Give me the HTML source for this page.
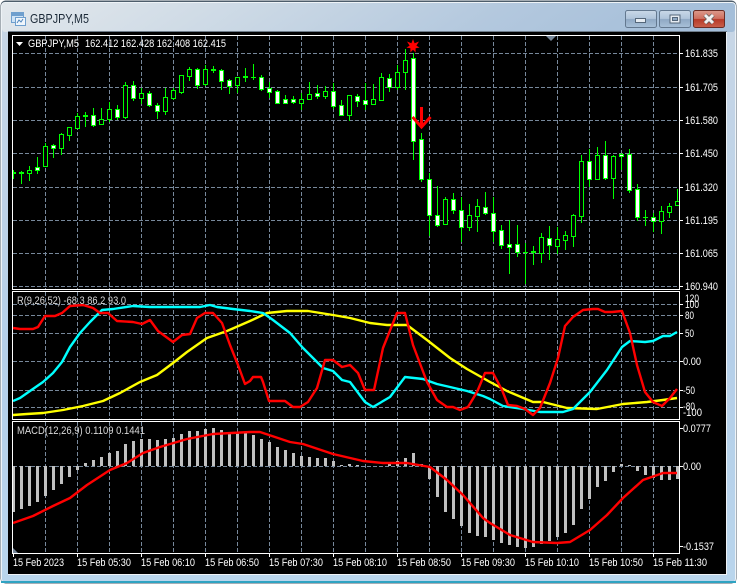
<!DOCTYPE html>
<html>
<head>
<meta charset="utf-8">
<title>GBPJPY,M5</title>
<style>
html,body{margin:0;padding:0;background:#fff;}
svg{display:block;position:absolute;left:0;top:0;}
text{font-family:"Liberation Sans",sans-serif;}
</style>
</head>
<body>
<svg width="737" height="584" viewBox="0 0 737 584" xmlns="http://www.w3.org/2000/svg">
<defs>
<linearGradient id="tb" x1="0" x2="1" y1="0" y2="0.06">
<stop offset="0" stop-color="#e3e8ec"/><stop offset="0.3" stop-color="#cfdbe6"/><stop offset="0.7" stop-color="#b3c8de"/><stop offset="1" stop-color="#a4bed9"/>
</linearGradient>
<linearGradient id="btn" x1="0" x2="0" y1="0" y2="1">
<stop offset="0" stop-color="#c9d8e8"/><stop offset="0.48" stop-color="#afc4da"/><stop offset="0.52" stop-color="#8fa9c4"/><stop offset="1" stop-color="#a9c1d9"/>
</linearGradient>
<linearGradient id="cls" x1="0" x2="0" y1="0" y2="1">
<stop offset="0" stop-color="#dc9a8c"/><stop offset="0.48" stop-color="#cf6f5f"/><stop offset="0.52" stop-color="#b63a28"/><stop offset="1" stop-color="#c9604c"/>
</linearGradient>
<linearGradient id="side" x1="0" x2="0" y1="0" y2="1">
<stop offset="0" stop-color="#c9d7e6"/><stop offset="0.6" stop-color="#b5cfe9"/><stop offset="1" stop-color="#b9d5ec"/>
</linearGradient>
<clipPath id="c1"><rect x="13" y="36" width="666" height="253"/></clipPath>
<clipPath id="c2"><rect x="13" y="292" width="666" height="127"/></clipPath>
<clipPath id="c3"><rect x="13" y="422" width="666" height="131"/></clipPath>
</defs>

<!-- window frame -->
<rect x="0.5" y="0.5" width="736" height="583" rx="5" fill="#4d5d6b"/>
<rect x="1" y="2" width="735" height="581" rx="4" fill="#eef3f7"/>
<rect x="2" y="3" width="733" height="579" rx="3" fill="url(#side)"/>
<rect x="2" y="3" width="733" height="29" rx="3" fill="url(#tb)"/>
<rect x="1" y="581" width="735" height="2" fill="#2fa3c2"/>
<rect x="8" y="31" width="719" height="544" fill="#eef2f6"/>
<rect x="8" y="31" width="719" height="1" fill="#6f7d8b"/>
<rect x="8" y="32" width="718" height="542" fill="#000"/>

<!-- title icon -->
<rect x="11.5" y="12.5" width="12" height="10" fill="#cfe3f6" stroke="#6f9fce"/>
<rect x="11.5" y="12.5" width="12" height="3" fill="#6f9fce" stroke="#6f9fce"/>
<rect x="15.5" y="17.5" width="10" height="8" fill="#f0f6fc" stroke="#6f9fce"/>
<path d="M17 23l2-3 2 2 2-3" fill="none" stroke="#4f86bd"/>
<text x="30" y="23" font-size="12.5" fill="#1c2a38" textLength="59" lengthAdjust="spacingAndGlyphs">GBPJPY,M5</text>

<!-- buttons -->
<rect x="625.5" y="10.5" width="31" height="17" rx="2" fill="url(#btn)" stroke="#63788f"/>
<rect x="635.5" y="18.5" width="10" height="4" fill="#e6ecf2" stroke="#55677a"/>
<rect x="659.5" y="10.5" width="31" height="17" rx="2" fill="url(#btn)" stroke="#63788f"/>
<rect x="670" y="15" width="10" height="8" fill="#e6ecf2" stroke="#55677a"/>
<rect x="672.5" y="17.5" width="5" height="3" fill="#8fa9c4" stroke="#55677a"/>
<rect x="693.5" y="10.5" width="31" height="17" rx="2" fill="url(#cls)" stroke="#6b2d25"/>
<path d="M705 15l8 8M713 15l-8 8" stroke="#5c5c5c" stroke-width="4.4"/>
<path d="M705 15l8 8M713 15l-8 8" stroke="#f2f2f2" stroke-width="3"/>

<!-- main panel grid -->
<g stroke="#77889b" stroke-width="1" stroke-dasharray="4 2" fill="none" shape-rendering="crispEdges">
<path d="M13 53.5H679M13 87.5H679M13 120.5H679M13 153.5H679M13 187.5H679M13 220.5H679M13 253.5H679M13 286.5H679"/>
<path d="M45.5 36V289M77.5 36V289M109.5 36V289M141.5 36V289M173.5 36V289M205.5 36V289M237.5 36V289M269.5 36V289M301.5 36V289M333.5 36V289M365.5 36V289M397.5 36V289M429.5 36V289M461.5 36V289M493.5 36V289M525.5 36V289M557.5 36V289M589.5 36V289M621.5 36V289M653.5 36V289"/>
</g>

<!-- candles -->
<g clip-path="url(#c1)" shape-rendering="crispEdges">
<path stroke="#00ff00" fill="none" d="M13.5 170V179M21.5 171V184M29.5 166V181M37.5 157V174M45.5 143V167M53.5 144V158M61.5 133V155M69.5 127V141M77.5 113V129M85.5 112V127M93.5 108V127M101.5 108V125M109.5 102V122M117.5 105V120M125.5 82V119M133.5 81V101M141.5 88V104M149.5 91V107M157.5 103V119M165.5 88V115M173.5 88V100M181.5 75V94M189.5 67V81M197.5 68V89M205.5 65V86M213.5 66V73M221.5 69V90M229.5 79V94M237.5 77V93M245.5 68V82M253.5 64V80M261.5 75V91M269.5 82V98M277.5 90V103M285.5 95V104M293.5 96V104M301.5 93V110M309.5 82V99M317.5 85V99M325.5 86V99M333.5 83V109M341.5 100V116M349.5 95V121M357.5 94V107M365.5 83V110M373.5 84V105M381.5 73V101M389.5 74V92M397.5 65V90M405.5 49V90M413.5 53V160M421.5 133V182M429.5 173V236M437.5 186V227M445.5 197V224M453.5 193V214M461.5 197V242M469.5 204V231M477.5 199V232M485.5 192V215M493.5 197V242M501.5 225V249M509.5 220V274M517.5 225V257M525.5 243V284M533.5 246V265M541.5 233V263M549.5 226V260M557.5 227V254M565.5 231V250M573.5 214V247M581.5 155V223M589.5 149V187M597.5 147V179M605.5 141V180M613.5 155V199M621.5 153V170M629.5 149V193M637.5 184V221M645.5 210V226M653.5 213V232M661.5 206V234M669.5 203V218M677.5 189V206"/>
<!-- hollow -->
<path stroke="#00ff00" fill="#000" d="M27.5 170.5h4v3h-4zM43.5 146.5h4v20h-4zM59.5 134.5h4v14h-4zM67.5 127.5h4v8h-4zM75.5 116.5h4v12h-4zM99.5 119.5h4v5h-4zM107.5 109.5h4v10h-4zM123.5 85.5h4v32h-4zM139.5 93.5h4v5h-4zM163.5 97.5h4v14h-4zM171.5 90.5h4v8h-4zM179.5 75.5h4v17h-4zM187.5 69.5h4v7h-4zM203.5 69.5h4v15h-4zM235.5 77.5h4v8h-4zM299.5 99.5h4v4h-4zM307.5 94.5h4v5h-4zM323.5 91.5h4v5h-4zM347.5 95.5h4v20h-4zM371.5 99.5h4v5h-4zM379.5 77.5h4v23h-4zM395.5 72.5h4v15h-4zM403.5 60.5h4v12h-4zM443.5 199.5h4v25h-4zM467.5 215.5h4v12h-4zM475.5 206.5h4v10h-4zM539.5 237.5h4v16h-4zM555.5 239.5h4v7h-4zM563.5 235.5h4v5h-4zM571.5 215.5h4v21h-4zM579.5 161.5h4v55h-4zM595.5 155.5h4v24h-4zM611.5 156.5h4v22h-4zM659.5 211.5h4v10h-4zM667.5 206.5h4v6h-4zM675.5 201.5h4v4h-4z"/>
<!-- filled -->
<path stroke="#00ff00" fill="#fff" d="M35.5 167.5h4v3h-4zM51.5 145.5h4v3h-4zM91.5 115.5h4v10h-4zM115.5 109.5h4v8h-4zM131.5 85.5h4v13h-4zM147.5 93.5h4v12h-4zM155.5 105.5h4v6h-4zM195.5 69.5h4v16h-4zM219.5 70.5h4v11h-4zM227.5 80.5h4v6h-4zM259.5 77.5h4v12h-4zM267.5 88.5h4v4h-4zM275.5 91.5h4v12h-4zM283.5 99.5h4v4h-4zM291.5 99.5h4v3h-4zM315.5 93.5h4v3h-4zM331.5 91.5h4v15h-4zM339.5 105.5h4v10h-4zM355.5 96.5h4v5h-4zM363.5 100.5h4v4h-4zM387.5 78.5h4v9h-4zM411.5 58.5h4v83h-4zM419.5 139.5h4v40h-4zM427.5 179.5h4v36h-4zM435.5 215.5h4v10h-4zM451.5 199.5h4v11h-4zM459.5 210.5h4v17h-4zM483.5 207.5h4v6h-4zM491.5 213.5h4v18h-4zM499.5 230.5h4v15h-4zM507.5 244.5h4v3h-4zM515.5 244.5h4v8h-4zM547.5 238.5h4v7h-4zM587.5 161.5h4v18h-4zM603.5 155.5h4v23h-4zM619.5 154.5h4v2h-4zM627.5 154.5h4v36h-4zM635.5 189.5h4v28h-4zM651.5 217.5h4v4h-4z"/>
<!-- dojis -->
<path fill="#00ff00" d="M13 172h3v2h-3zM19 172h5v2h-5zM83 115h5v2h-5zM211 69h5v2h-5zM243 76h5v2h-5zM251 77h5v1h-5zM523 252h5v1h-5zM531 251h5v2h-5zM643 217h5v1h-5z"/>
</g>

<!-- star and arrow -->
<polygon fill="#ff0000" points="413,39 414.6,43.2 419,41.5 416.4,45.6 419.6,47.6 415.6,48.2 415.6,52.5 413,49.8 410.4,52.5 410.4,48.2 406.4,47.6 409.6,45.6 407,41.5 411.4,43.2"/>
<path d="M421.5 107V126" stroke="#ff0000" stroke-width="3" fill="none"/>
<path d="M412.5 117L421.5 127L430.5 117" stroke="#ff0000" stroke-width="3" fill="none"/>

<!-- header text -->
<polygon points="16,42 23,42 19.5,46" fill="#fff"/>
<text x="28" y="47" font-size="11" fill="#fff" textLength="51" lengthAdjust="spacingAndGlyphs">GBPJPY,M5</text>
<text x="85" y="47" font-size="11" fill="#fff" textLength="141" lengthAdjust="spacingAndGlyphs">162.412 162.428 162.408 162.415</text>
<polygon points="546,36 556,36 551,41" fill="#77889b"/>

<!-- indicator panel grid -->
<g stroke="#77889b" stroke-width="1" stroke-dasharray="4 2" fill="none" shape-rendering="crispEdges">
<path d="M13 304.5H679M13 315.5H679M13 333.5H679M13 361.5H679M13 390.5H679M13 407.5H679"/>
<path d="M45.5 292V419M77.5 292V419M109.5 292V419M141.5 292V419M173.5 292V419M205.5 292V419M237.5 292V419M269.5 292V419M301.5 292V419M333.5 292V419M365.5 292V419M397.5 292V419M429.5 292V419M461.5 292V419M493.5 292V419M525.5 292V419M557.5 292V419M589.5 292V419M621.5 292V419M653.5 292V419"/>
</g>
<g clip-path="url(#c2)" fill="none" stroke-width="2.4" stroke-linejoin="round">
<polyline stroke="#ffff00" points="13,415 27,414 43,413 63,410 83,406 103,401 120,393 140,382 157,375 173,363 187,352 207,338 227,331 250,321 267,313 287,311 308,311 333,315 350,318 370,323 387,325 407,325 427,340 450,358 467,369 483,378 490,382 507,391 533,402 543,402 567,408 597,409 623,404 647,402 663,400 677,398"/>
<polyline stroke="#00ffff" points="13,401 20,398 30,391 43,382 53,373 62,362 70,347 80,333 90,322 102,310 113,309 133,306 150,307 200,307 210,305 217,307 233,309 250,311 263,313 273,320 290,333 303,348 323,368 333,371 342,380 350,382 365,402 373,407 390,397 405,377 423,379 437,384 450,387 467,391 483,396 490,399 503,406 523,409 540,412 563,412 573,409 590,392 607,370 622,347 630,341 645,342 653,341 663,336 670,336 677,332"/>
<polyline stroke="#ff0000" points="13,328 20,329 33,329 38,327 45,316 55,316 62,313 70,306 83,305 93,308 100,313 108,313 117,321 133,322 142,324 150,320 158,331 173,342 182,335 190,334 197,318 205,313 213,313 222,323 230,345 238,365 245,384 250,381 253,377 261,377 263,382 269,401 285,401 293,407 300,407 308,402 317,388 325,360 333,360 342,367 350,365 358,373 365,390 374,390 383,348 397,313 405,313 413,345 427,382 437,400 447,407 453,407 460,410 468,407 477,392 485,373 493,373 502,390 508,405 517,406 525,409 533,415 540,408 550,383 558,358 565,326 573,317 583,310 593,309 598,309 605,312 612,312 622,311 630,333 637,365 645,392 653,402 662,406 670,398 677,389"/>
</g>
<text x="17" y="304" font-size="11" fill="#d8d8d8" textLength="109" lengthAdjust="spacingAndGlyphs">R(9,26,52) -68.3 86.2 93.0</text>

<!-- MACD panel -->
<g stroke="#77889b" stroke-width="1" stroke-dasharray="4 2" fill="none" shape-rendering="crispEdges">
<path d="M13 466.5H679"/>
<path d="M45.5 422V553M77.5 422V553M109.5 422V553M141.5 422V553M173.5 422V553M205.5 422V553M237.5 422V553M269.5 422V553M301.5 422V553M333.5 422V553M365.5 422V553M397.5 422V553M429.5 422V553M461.5 422V553M493.5 422V553M525.5 422V553M557.5 422V553M589.5 422V553M621.5 422V553M653.5 422V553"/>
</g>
<g clip-path="url(#c3)">
<path stroke="#c0c0c0" stroke-width="3" fill="none" shape-rendering="crispEdges" d="M13.5 466V512M21.5 466V509M29.5 466V506M37.5 466V502M45.5 466V496M53.5 466V490M61.5 466V484M69.5 466V477M77.5 466V470M85.5 466V463M93.5 466V460M101.5 466V457M109.5 466V453M117.5 466V451M125.5 466V444M133.5 466V441M141.5 466V439M149.5 466V439M157.5 466V440M165.5 466V439M173.5 466V438M181.5 466V434M189.5 466V431M197.5 466V431M205.5 466V429M213.5 466V428M221.5 466V430M229.5 466V433M237.5 466V433M245.5 466V433M253.5 466V435M261.5 466V439M269.5 466V442M277.5 466V447M285.5 466V450M293.5 466V453M301.5 466V456M309.5 466V457M317.5 466V458M325.5 466V458M333.5 466V461M341.5 466V465M349.5 466V464M357.5 466V465M389.5 466V464M397.5 466V461M405.5 466V458M413.5 466V453M421.5 466V464M429.5 466V479M437.5 466V497M445.5 466V512M453.5 466V519M461.5 466V526M469.5 466V533M477.5 466V536M485.5 466V537M493.5 466V540M501.5 466V543M509.5 466V545M517.5 466V547M525.5 466V548M533.5 466V547M541.5 466V544M549.5 466V541M557.5 466V537M565.5 466V533M573.5 466V525M581.5 466V509M589.5 466V499M597.5 466V487M605.5 466V481M613.5 466V472M621.5 466V464M629.5 466V465M637.5 466V471M645.5 466V475M653.5 466V478M661.5 466V480M669.5 466V480M677.5 466V479"/>
<polyline fill="none" stroke="#ff0000" stroke-width="2.4" stroke-linejoin="round" points="13,523 33,516 53,506 70,498 87,485 110,470 127,463 143,453 160,447 187,439 213,434 250,432 260,432 290,442 303,444 333,454 363,461 383,463 407,463 430,467 447,480 463,495 483,518 490,523 510,535 533,542 557,543 570,542 590,530 607,515 623,498 643,480 663,473 677,473"/>
<polygon points="13,548 13,553 18,553" fill="#77889b"/>
</g>
<text x="17" y="434" font-size="11" fill="#d8d8d8" textLength="128" lengthAdjust="spacingAndGlyphs">MACD(12,26,9) 0.1109 0.1441</text>

<!-- panel frames -->
<g fill="none" stroke="#fff" stroke-width="1" shape-rendering="crispEdges">
<rect x="12.5" y="35.5" width="667" height="254"/>
<rect x="12.5" y="291.5" width="667" height="128"/>
<rect x="12.5" y="421.5" width="667" height="132"/>
<!-- ticks -->
<path d="M680 53.5h3M680 87.5h3M680 120.5h3M680 153.5h3M680 187.5h3M680 220.5h3M680 253.5h3M680 286.5h3M680 304.5h3M680 315.5h3M680 333.5h3M680 361.5h3M680 390.5h3M680 407.5h3M680 466.5h3M680 428.5h3M680 546.5h3"/>
<path d="M13.5 554v3M77.5 554v3M141.5 554v3M205.5 554v3M269.5 554v3M333.5 554v3M397.5 554v3M461.5 554v3M525.5 554v3M589.5 554v3M653.5 554v3"/>
</g>

<!-- axis labels -->
<g font-size="11" fill="#fff">
<text x="685" y="57" textLength="33" lengthAdjust="spacingAndGlyphs">161.835</text>
<text x="685" y="91" textLength="33" lengthAdjust="spacingAndGlyphs">161.705</text>
<text x="685" y="124" textLength="33" lengthAdjust="spacingAndGlyphs">161.580</text>
<text x="685" y="157" textLength="33" lengthAdjust="spacingAndGlyphs">161.450</text>
<text x="685" y="191" textLength="33" lengthAdjust="spacingAndGlyphs">161.320</text>
<text x="685" y="224" textLength="33" lengthAdjust="spacingAndGlyphs">161.195</text>
<text x="685" y="257" textLength="33" lengthAdjust="spacingAndGlyphs">161.065</text>
<text x="685" y="290" textLength="33" lengthAdjust="spacingAndGlyphs">160.940</text>
<text x="685" y="302" textLength="14" lengthAdjust="spacingAndGlyphs">120</text>
<text x="685" y="308" textLength="14" lengthAdjust="spacingAndGlyphs">100</text>
<text x="685" y="319" textLength="9" lengthAdjust="spacingAndGlyphs">80</text>
<text x="685" y="337" textLength="9" lengthAdjust="spacingAndGlyphs">50</text>
<text x="683" y="365" textLength="18" lengthAdjust="spacingAndGlyphs">0.00</text>
<text x="683" y="394" textLength="12" lengthAdjust="spacingAndGlyphs">-50</text>
<text x="683" y="410" textLength="12" lengthAdjust="spacingAndGlyphs">-80</text>
<text x="683" y="416" textLength="19" lengthAdjust="spacingAndGlyphs">-100</text>
<text x="683" y="432" textLength="28" lengthAdjust="spacingAndGlyphs">0.0777</text>
<text x="683" y="470" textLength="18" lengthAdjust="spacingAndGlyphs">0.00</text>
<text x="683" y="550" textLength="31" lengthAdjust="spacingAndGlyphs">-0.1537</text>
<text x="13" y="566" textLength="51" lengthAdjust="spacingAndGlyphs">15 Feb 2023</text>
<text x="77" y="566" textLength="54" lengthAdjust="spacingAndGlyphs">15 Feb 05:30</text>
<text x="141" y="566" textLength="54" lengthAdjust="spacingAndGlyphs">15 Feb 06:10</text>
<text x="205" y="566" textLength="54" lengthAdjust="spacingAndGlyphs">15 Feb 06:50</text>
<text x="269" y="566" textLength="54" lengthAdjust="spacingAndGlyphs">15 Feb 07:30</text>
<text x="333" y="566" textLength="54" lengthAdjust="spacingAndGlyphs">15 Feb 08:10</text>
<text x="397" y="566" textLength="54" lengthAdjust="spacingAndGlyphs">15 Feb 08:50</text>
<text x="461" y="566" textLength="54" lengthAdjust="spacingAndGlyphs">15 Feb 09:30</text>
<text x="525" y="566" textLength="54" lengthAdjust="spacingAndGlyphs">15 Feb 10:10</text>
<text x="589" y="566" textLength="54" lengthAdjust="spacingAndGlyphs">15 Feb 10:50</text>
<text x="653" y="566" textLength="54" lengthAdjust="spacingAndGlyphs">15 Feb 11:30</text>
</g>
</svg>
</body>
</html>
